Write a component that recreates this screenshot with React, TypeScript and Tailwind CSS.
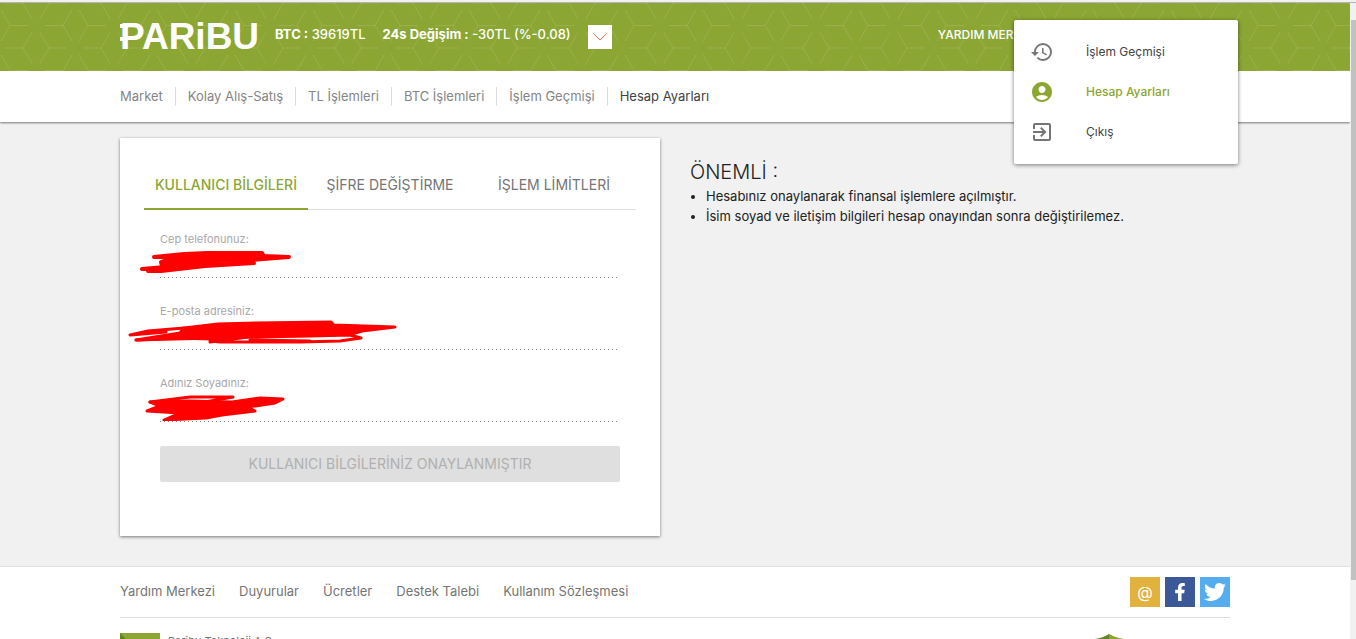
import { useState } from 'react';
import type { ReactNode } from 'react';
import { MdHistory, MdAccountCircle, MdExitToApp } from 'react-icons/md';
import { FaFacebookF, FaTwitter } from 'react-icons/fa';

const navLinks = ['Market', 'Kolay Alış-Satış', 'TL İşlemleri', 'BTC İşlemleri', 'İşlem Geçmişi', 'Hesap Ayarları'];
const footerLinks = ['Yardım Merkezi', 'Duyurular', 'Ücretler', 'Destek Talebi', 'Kullanım Sözleşmesi'];
const tabs = ['KULLANICI BİLGİLERİ', 'ŞİFRE DEĞİŞTİRME', 'İŞLEM LİMİTLERİ'];

function HeaderPattern() {
  return (
    <svg className="absolute inset-0 h-full w-full" aria-hidden="true">
      <defs>
        <pattern id="hex" width="78" height="45" patternUnits="userSpaceOnUse">
          <path
            d="M28 22.5H10L1 7M10 22.5L1 38M45 22.5H63L72 7M63 22.5L72 38M67 0H49L40 15.5M5 0H23L32 15.5M67 45H49L40 29.5M5 45H23L32 29.5"
            fill="none"
            stroke="#9aaf4e"
            strokeWidth="1"
          />
        </pattern>
      </defs>
      <rect width="100%" height="100%" fill="url(#hex)" />
    </svg>
  );
}

function Logo() {
  return (
    <svg width="144" height="46" viewBox="0 0 144 46" fill="#fff" role="img" aria-label="Paribu">
      <text x="0" y="37" fontSize="37" fontWeight="700" fontFamily="'Liberation Sans', Arial, sans-serif">PARiBU</text>
      <path d="M0 12h5v4H0zM0 25h5v4H0z" />
    </svg>
  );
}

function Field({ id, label, children }: { id: string; label: string; children: ReactNode }) {
  return (
    <div className="relative h-[72px]">
      <label htmlFor={id} className="block text-[11px] leading-4 text-[#a8a8a8]">{label}</label>
      <input
        id={id}
        readOnly
        className="block h-[31px] w-full bg-[linear-gradient(to_right,#8c8c8c_1px,transparent_1px)] bg-[length:4px_1px] bg-bottom-left bg-repeat-x text-[13px] outline-none"
      />
      {children}
    </div>
  );
}

export default function App() {
  const [activeTab, setActiveTab] = useState(0);

  return (
    <div className="flex h-screen flex-col overflow-hidden bg-[#f1f1f1] font-[Inter,'Noto_Sans',sans-serif] text-[13px] text-[#757575]">
      <div className="h-[3px] shrink-0 border-b border-[#b3b1b9] bg-[#f1f1f1]" />
      <div className="flex min-h-0 flex-1">
        <div className="min-w-0 flex-1 overflow-hidden">
          {/* Header */}
          <header className="relative h-[68px] bg-[#8ba633] text-white">
            <HeaderPattern />
            <div className="relative mx-auto flex h-full max-w-[1110px] items-center pb-1">
              <a href="#" className="mr-[11px]"><Logo /></a>
              <p className="mr-[17px] text-[13px] font-medium"><b>BTC :</b> 39619TL</p>
              <p className="mr-[17px] text-[13px] font-medium"><b>24s Değişim :</b> -30TL (%-0.08)</p>
              <button aria-label="Fiyatlar" className="mt-1 flex h-6 w-6 items-center justify-center bg-white">
                <svg width="14" height="8" viewBox="0 0 14 8" fill="none" stroke="#f0785f"><path d="M.5.5L7 7 13.5.5" /></svg>
              </button>
              <a href="#" className="mr-[190px] ml-auto text-xs font-medium">YARDIM MERKEZİ</a>

              {/* Account menu */}
              <nav className="absolute top-[17px] right-[-8px] z-10 flex h-36 w-56 flex-col rounded-[2px] bg-white py-3 text-xs text-[#424242] shadow-[0_1px_4px_rgba(0,0,0,0.5)]">
                <a href="#" className="flex h-10 items-center gap-8 px-4">
                  <MdHistory className="h-6 w-6 text-[#757575]" />İşlem Geçmişi
                </a>
                <a href="#" className="flex h-10 items-center gap-8 px-4 font-medium text-[#8ba633]">
                  <MdAccountCircle className="h-6 w-6" />Hesap Ayarları
                </a>
                <a href="#" className="flex h-10 items-center gap-8 px-4">
                  <MdExitToApp className="h-6 w-6 text-[#757575]" />Çıkış
                </a>
              </nav>
            </div>
          </header>

          <nav className="h-[51px] bg-white shadow-[0_1px_2px_rgba(0,0,0,0.5)]">
            <ul className="mx-auto flex h-full max-w-[1110px] items-center">
              {navLinks.map((item, i) => (
                <li key={item} className={i > 0 ? 'ml-3 border-l border-[#dcdcdc] pl-3' : ''}>
                  <a href="#" className={i === navLinks.length - 1 ? 'text-[#424242]' : 'text-[#858585]'}>{item}</a>
                </li>
              ))}
            </ul>
          </nav>

          {/* Account settings */}
          <main className="mx-auto flex max-w-[1110px] gap-[30px] pt-4 pb-[30px]">
            <section className="h-[398px] w-[540px] shrink-0 bg-white px-6 pt-6 shadow-[0_1px_3px_rgba(0,0,0,0.5)]">
              <div role="tablist" className="flex h-12 border-b border-[#dcdcdc]">
                {tabs.map((tab, i) => (
                  <button
                    key={tab}
                    role="tab"
                    aria-selected={i === activeTab}
                    onClick={() => setActiveTab(i)}
                    className={`-mb-px h-12 flex-1 border-b-2 text-sm ${i === activeTab ? 'border-[#8ba633] font-medium text-[#8ba633]' : 'border-transparent'}`}
                  >
                    {tab}
                  </button>
                ))}
              </div>
              <form className="px-4 pt-[21px]">
                <Field id="phone" label="Cep telefonunuz:">
                  <svg className="absolute -top-1 -left-5" width="154" height="48" viewBox="140 227 154 48" fill="none" stroke="#f00" strokeWidth="4" strokeLinecap="round" strokeLinejoin="round">
                    <path fill="#f00" d="M154 257L184 254 208 253 262 253 264 256 289 257 250 260 218 261 162 266 161 262 174 257Z" />
                    <path d="M142 269L165 267 254 263 205 266 161 271 148 271" />
                  </svg>
                </Field>
                <Field id="email" label="E-posta adresiniz:">
                  <svg className="absolute -top-1 -left-8" width="270" height="48" viewBox="128 299 270 48" fill="none" stroke="#f00" strokeWidth="3" strokeLinecap="round" strokeLinejoin="round">
                    <path fill="#f00" d="M136 340L180 333 184 328 218 324 256 323 331 322 334 325 395 327 362 331 352 334 300 335 248 337 212 339 176 338Z" />
                    <path d="M130 335L148 331 184 328M130 335L166 332M136 340L212 338M210 342L248 337 310 336 350 335 361 338 340 341 300 342 220 342 210 341M250 340L310 341" />
                  </svg>
                </Field>
                <Field id="name" label="Adınız Soyadınız:">
                  <svg className="absolute -top-1 -left-4" width="142" height="50" viewBox="144 371 142 50" fill="none" stroke="#f00" strokeWidth="3" strokeLinecap="round" strokeLinejoin="round">
                    <path fill="#f00" d="M150 402L188 401 232 402 260 398 283 399 275 403 248 407 255 411 222 415 206 418 164 420 180 413 147 411 160 406Z" />
                    <path d="M150 402L190 397 233 397 205 402" />
                  </svg>
                </Field>
                <button type="button" disabled className="mt-[-1px] block h-9 w-full rounded-[2px] bg-[#dfdfdf] text-sm text-[#b0b0b0]">
                  KULLANICI BİLGİLERİNİZ ONAYLANMIŞTIR
                </button>
              </form>
            </section>

            <section className="pt-[21px] text-[#212121]">
              <h2 className="text-xl leading-[27px] font-light">ÖNEMLİ :</h2>
              <ul className="list-disc pl-4 text-[13px] leading-5">
                <li>Hesabınız onaylanarak finansal işlemlere açılmıştır.</li>
                <li>İsim soyad ve iletişim bilgileri hesap onayından sonra değiştirilemez.</li>
              </ul>
            </section>
          </main>

          {/* Footer */}
          <footer className="border-t border-[#e0e0e0] bg-white">
            <div className="mx-auto max-w-[1110px]">
              <div className="flex h-[51px] items-center border-b border-[#dcdcdc]">
                <nav className="flex gap-6">
                  {footerLinks.map((item) => <a key={item} href="#">{item}</a>)}
                </nav>
                <div className="ml-auto flex gap-[5px] text-white">
                  <a href="#" aria-label="E-posta" className="flex h-[30px] w-[30px] items-center justify-center bg-[#e2b23e] text-base">@</a>
                  <a href="#" aria-label="Facebook" className="flex h-[30px] w-[30px] items-center justify-center bg-[#3b5998]"><FaFacebookF size={18} /></a>
                  <a href="#" aria-label="Twitter" className="flex h-[30px] w-[30px] items-center justify-center bg-[#55acee]"><FaTwitter size={22} /></a>
                </div>
              </div>
              <div className="flex items-start pt-[15px]">
                <svg width="40" height="40" viewBox="0 0 40 40"><path fill="#8ba633" d="M0 0h40v40H0z" /><path fill="#5f8426" d="M0 0l20 20L0 40z" /></svg>
                <p className="ml-2 text-[11px] leading-4">Paribu Teknoloji A.Ş.</p>
                <svg className="mt-px mr-[106px] ml-auto" width="30" height="36" viewBox="0 0 30 36">
                  <path fill="#5f8426" d="M15 0q6 4 14 5v14q-2 12-14 17Q3 31 1 19V5q8-1 14-5z" />
                  <path fill="#8ba633" d="M15 0q6 4 14 5v14q-2 12-14 17z" />
                </svg>
              </div>
            </div>
          </footer>
        </div>

        {/* Scrollbar */}
        <div className="flex w-[6px] shrink-0 flex-col items-end bg-[#f1f1f1] pt-[17px] pb-[59px]">
          <div className="w-[5px] flex-1 bg-[#c1c1c1]" />
        </div>
      </div>
    </div>
  );
}
